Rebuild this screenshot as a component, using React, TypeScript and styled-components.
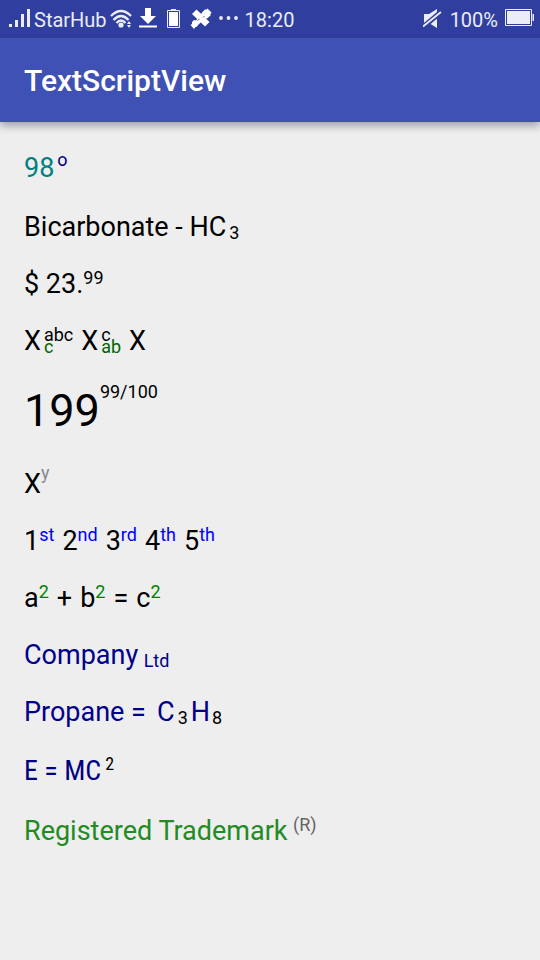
import React from 'react';
import styled, { createGlobalStyle } from 'styled-components';

const GlobalStyle = createGlobalStyle`
  * { box-sizing: border-box; }
  body {
    margin: 0;
    background: #eeeeee;
    color: #000000;
    font-family: Roboto, 'Noto Sans', sans-serif;
  }
`;

const Screen = styled.div`
  min-height: 100vh;
  display: flex;
  flex-direction: column;
`;

const StatusBar = styled.div`
  display: flex;
  justify-content: space-between;
  align-items: center;
  height: 38px;
  padding: 0 6px 0 9px;
  background: #303f9f;
  color: #eaecf6;
  font-size: 20px;
  line-height: 24px;
  white-space: nowrap;
`;

const StatusGroup = styled.div<{ $gap: number }>`
  display: flex;
  align-items: center;
  gap: ${(p) => p.$gap}px;
`;

const StatusText = styled.span`
  padding-top: 2px;
`;

const Glyph = styled.svg`
  display: block;
  flex: none;
  fill: currentColor;
`;

const AppBar = styled.header`
  display: flex;
  align-items: center;
  height: 84px;
  padding: 2px 24px 0;
  background: #3f51b5;
  box-shadow: 0 4px 8px rgba(0, 0, 0, 0.32);
`;

const Title = styled.h1`
  margin: 0;
  color: #ffffff;
  font-size: 30px;
  line-height: 36px;
  font-weight: 500;
`;

const Content = styled.main`
  display: flex;
  flex-direction: column;
  gap: 24px;
  padding: 30px 24px;
`;

const Line = styled.p<{ $color?: string; $extra?: boolean }>`
  margin: 0;
  padding-bottom: ${(p) => (p.$extra ? 2 : 0)}px;
  color: ${(p) => p.$color ?? '#000000'};
  font-size: 27px;
  line-height: 33px;
  white-space: pre-wrap;
`;

const LargeLine = styled(Line)`
  padding-bottom: 4px;
  font-size: 45px;
  line-height: 58px;
`;

const TermLine = styled(Line)`
  display: flex;
  flex-wrap: wrap;
  align-items: baseline;
  column-gap: 8px;
`;

const CondensedLine = styled(Line)`
  font-family: 'Roboto Condensed', 'Liberation Sans Narrow', Roboto, sans-serif;
  font-size: 28px;
  line-height: 36px;
`;

const Script = styled.span<{ $rise: number; $color?: string; $gap?: number; $after?: number }>`
  margin-left: ${(p) => p.$gap ?? 0}px;
  margin-right: ${(p) => p.$after ?? 0}px;
  color: ${(p) => p.$color ?? 'inherit'};
  font-size: 18px;
  line-height: 0;
  vertical-align: ${(p) => p.$rise}px;
`;

const ScriptStack = styled.span`
  display: inline-flex;
  flex-direction: column;
  height: 12px;
  margin-left: 3px;
  font-size: 18px;
  line-height: 12px;
  vertical-align: 9px;
`;

const Lower = styled.span`
  color: #006400;
`;

const SignalIcon = () => (
  <Glyph width="22" height="20" viewBox="0 0 22 20" aria-hidden="true">
    <path d="M0 15h3v3H0zM6 11h3v7H6zM12 5h3v13h-3zM18 0h3v18h-3z" />
  </Glyph>
);

const WifiIcon = () => (
  <Glyph width="23" height="20" viewBox="0 0 23 20" aria-hidden="true">
    <g fill="none" stroke="currentColor" strokeWidth="2.300">
      <path d="M1 7Q11 -3 21 7" />
      <path d="M3.500 11Q11 3 18.500 11" />
      <path d="M6.500 14Q11 9 15.500 14" />
    </g>
    <circle cx="11" cy="16" r="2.600" />
    <path d="M17 15l2-3 2 3zM17 16h4l-2 3z" />
  </Glyph>
);

const DownloadIcon = () => (
  <Glyph width="19" height="22" viewBox="0 0 19 22" aria-hidden="true">
    <path d="M6 0h6v8h5l-8 8-8-8h5zM0 17.500h18v2H0z" fill="#ffffff" />
  </Glyph>
);

const BatterySmallIcon = () => (
  <Glyph width="14" height="20" viewBox="0 0 14 20" aria-hidden="true">
    <path d="M4 0h5v2H4z" />
    <path d="M.5 1.500h12v17H.5z" fill="none" stroke="currentColor" />
    <path d="M2 3h9v14H2z" fill="#ffffff" />
  </Glyph>
);

const ToolsIcon = () => (
  <Glyph width="22" height="22" viewBox="0 0 22 22" aria-hidden="true">
    <g fill="#ffffff">
      <path d="M2 6L6.500 1.500l13 12.500-4.500 4.500z" />
      <path d="M12.500 4L15 1.500h1.500L17.500 .5l4 4L20.500 6v1.500l-3.500 3-2 0-6.500 6L6.500 19H5.500L4 21 .5 17 2 16v-2l2-2 2 .5z" />
    </g>
    <path d="M7.500 12.500l2-1.500M13 9.500l1.500-1.500" stroke="#303f9f" strokeWidth="0.800" />
  </Glyph>
);

const DotsIcon = () => (
  <Glyph width="19" height="6" viewBox="0 0 19 6" aria-hidden="true">
    <circle cx="2" cy="2" r="1.900" />
    <circle cx="9.500" cy="2" r="1.900" />
    <circle cx="17" cy="2" r="1.900" />
  </Glyph>
);

const MutedIcon = () => (
  <Glyph width="19" height="20" viewBox="0 0 19 20" aria-hidden="true">
    <path d="M1 5h5l8-5v19l-8-5H1z" />
    <path d="M0 18L18 3" stroke="#303f9f" strokeWidth="5" />
    <path d="M0 17.500L18 3" stroke="currentColor" strokeWidth="1.800" />
  </Glyph>
);

const BatteryIcon = () => (
  <Glyph width="29" height="20" viewBox="0 0 29 20" aria-hidden="true">
    <path d="M.5 .5h26v16H.5z" fill="none" stroke="currentColor" />
    <path d="M2 2h23v13H2zM27.500 5H29v7h-1.500z" />
  </Glyph>
);

export default function App() {
  return (
    <Screen>
      <GlobalStyle />
      <StatusBar>
        <StatusGroup $gap={3}>
          <SignalIcon />
          <StatusText>StarHub</StatusText>
          <WifiIcon />
          <StatusGroup $gap={9}>
            <StatusGroup $gap={3}>
              <span />
              <DownloadIcon />
            </StatusGroup>
            <BatterySmallIcon />
            <StatusGroup $gap={7}>
              <ToolsIcon />
              <DotsIcon />
              <StatusText>18:20</StatusText>
            </StatusGroup>
          </StatusGroup>
        </StatusGroup>
        <StatusGroup $gap={7}>
          <StatusGroup $gap={8}>
            <MutedIcon />
            <StatusText>100%</StatusText>
          </StatusGroup>
          <BatteryIcon />
        </StatusGroup>
      </StatusBar>
      <AppBar>
        <Title>TextScriptView</Title>
      </AppBar>
      <Content>
        <Line $color="#008080" $extra>
          98<Script $rise={11} $gap={3} $color="#000080">o</Script>
        </Line>
        <Line>
          Bicarbonate - HC<Script $rise={-3} $gap={3}>3</Script>
        </Line>
        <Line>
          $ 23.<Script $rise={9}>99</Script>
        </Line>
        <TermLine>
          <span>
            X
            <ScriptStack>
              <span>abc</span>
              <Lower>c</Lower>
            </ScriptStack>
          </span>
          <span>
            X
            <ScriptStack>
              <span>c</span>
              <Lower>ab</Lower>
            </ScriptStack>
          </span>
          <span>X</span>
        </TermLine>
        <LargeLine>
          199<Script $rise={28}>99/100</Script>
        </LargeLine>
        <Line>
          X<Script $rise={14} $color="#888888">y</Script>
        </Line>
        <TermLine>
          <span>1<Script $rise={9} $color="#0000ff">st</Script></span>
          <span>2<Script $rise={9} $color="#0000ff">nd</Script></span>
          <span>3<Script $rise={9} $color="#0000ff">rd</Script></span>
          <span>4<Script $rise={9} $color="#0000ff">th</Script></span>
          <span>5<Script $rise={9} $color="#0000ff">th</Script></span>
        </TermLine>
        <TermLine>
          <span>a<Script $rise={9} $color="#008000">2</Script></span>
          <span>+</span>
          <span>b<Script $rise={9} $color="#008000">2</Script></span>
          <span>=</span>
          <span>c<Script $rise={9} $color="#008000">2</Script></span>
        </TermLine>
        <Line $color="#00008b">
          Company<Script $rise={-3} $gap={1}> Ltd</Script>
        </Line>
        <Line $color="#00008b">
          {'Propane = '}<Script $rise={0}> </Script>
          C<Script $rise={-3} $gap={3} $after={3} $color="#000000">3</Script>
          H<Script $rise={-3} $gap={2} $color="#000000">8</Script>
        </Line>
        <CondensedLine $color="#000080" $extra>
          E = MC<Script $rise={10} $color="#000000"> 2</Script>
        </CondensedLine>
        <Line $color="#228b22">
          Registered Trademark<Script $rise={9} $gap={1} $color="#666666"> (R)</Script>
        </Line>
      </Content>
    </Screen>
  );
}
